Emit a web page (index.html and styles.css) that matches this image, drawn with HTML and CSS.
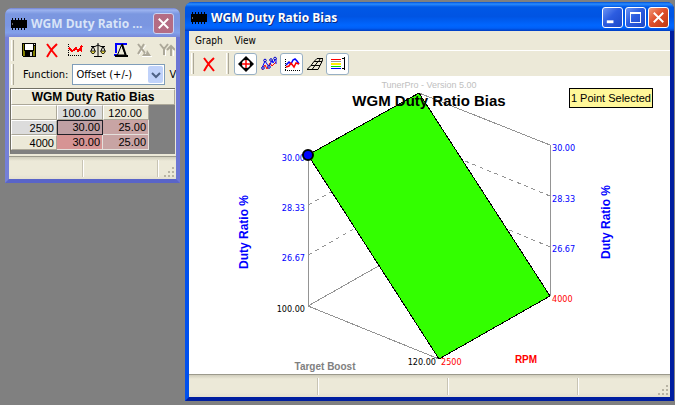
FILE: index.html
```html
<!DOCTYPE html>
<html lang="en">
<head>
  <meta charset="UTF-8">
  <meta name="viewport" content="width=device-width, initial-scale=1.0">
  <title>WGM Duty Ratio Bias</title>
  <link rel="stylesheet" href="styles.css">
</head>
<body>
  <!-- icons shared by both windows -->
  <svg class="defs" width="0" height="0" aria-hidden="true">
    <symbol id="chip" viewBox="0 0 16 12">
      <path fill="#000" d="M0 2h16v8H0z"/>
      <path stroke="#000" d="M1.500 0v12M4.500 0v12M7.500 0v12M10.500 0v12M13.500 0v12" shape-rendering="crispEdges"/>
      <path fill="#666" d="M1 5h1v2H1z"/>
    </symbol>
    <symbol id="redx" viewBox="0 0 16 16">
      <path fill="none" stroke="#f00" stroke-width="2" d="M3 2l3 4 3 4 4 5M13 2L9 6l-3 4-3 5"/>
    </symbol>
  </svg>

  <div class="desktop">
    <section class="window inactive">
      <header class="titlebar">
        <svg class="chip"><use href="#chip"/></svg>
        <h1>WGM Duty Ratio ...</h1>
        <button class="caption close" aria-label="Close"><svg viewBox="0 0 20 20"><path d="M5 5l10 10M15 5L5 15"/></svg></button>
      </header>
      <div class="toolbar">
        <span class="grip"></span>
        <button aria-label="Save"><svg viewBox="0 0 16 16" shape-rendering="crispEdges"><path fill="#000" d="M1 1h14v14H2L1 14z"/><path fill="#808000" d="M2 2h1v7h10V4h1v10H2z"/><path fill="#fff" d="M4 2h8v6H4z"/><path fill="#000" d="M4 9h8v5H4z"/><path fill="#ddd" d="M9 10h2v4H9zM13 2h1v1h-1z"/></svg></button>
        <button aria-label="Clear"><svg><use href="#redx"/></svg></button>
        <button aria-label="Graph"><svg viewBox="0 0 16 16" shape-rendering="crispEdges"><path fill="none" stroke="#000" stroke-dasharray="1 1" d="M1.500 2v12M1 13.500h14"/><path fill="none" stroke="#f00" stroke-width="1.500" d="M2 6l2 2 1 1 2-1 2-2 2 3 2-2 1 1V5l1-1"/></svg></button>
        <button aria-label="Compare"><svg viewBox="0 0 16 16"><path fill="none" stroke="#000" d="M8 1v13M4 14.500h8M1 4.500h4L8 3l3 1.500h4M3 4L1 9M3 4l2 5M13 4l-2 5M13 4l2 5"/><path fill="#f0e048" stroke="#000" stroke-width=".8" d="M.5 9h5L4 11.500H2zM10.500 9h5L14 11.500h-2z"/></svg></button>
        <button aria-label="Difference"><svg viewBox="0 0 16 16"><path fill="none" stroke="#00f" stroke-width="2" d="M14 2H3v9M1 13h6"/><path fill="#ece9d8" stroke="#000" d="M8.500 3L4.500 13h8z"/><path fill="none" stroke="#000" stroke-width="2" d="M9 2l4 12M2 14h13"/></svg></button>
        <button aria-label="Scale X" disabled><svg viewBox="0 0 16 16"><path fill="none" stroke="#fff" d="M3 3l8 10M10 3L3 13M6 14.500h10"/><path fill="none" stroke="#aca899" stroke-width="2" d="M2 2l7 9M8 2L2 12"/><path fill="#aca899" d="M15 14H6l2-3 2 1 1-4z"/></svg></button>
        <button aria-label="Scale Y" disabled><svg viewBox="0 0 16 16"><path fill="none" stroke="#fff" d="M6.500 8v6M14.500 6v8"/><path fill="none" stroke="#aca899" stroke-width="2" d="M1 2l4 5 4-5M5 7v6M12 4v10M8 8l4-4 4 4"/></svg></button>
      </div>
      <div class="toolbar functions">
        <span class="grip"></span>
        <label for="function">Function:</label>
        <span class="combo">
          <select id="function">
            <option>Offset (+/-)</option>
          </select>
          <svg viewBox="0 0 15 17"><path d="M4 7l4 4 4-4"/></svg>
        </span>
        <span>V</span>
      </div>
      <table class="grid">
        <colgroup><col class="key"><col class="val"><col class="val"><col></colgroup>
        <tr><th class="name" colspan="4">WGM Duty Ratio Bias</th></tr>
        <tr><th></th><th class="selected">100.00</th><th>120.00</th><td class="blank" rowspan="3"></td></tr>
        <tr><th class="selected">2500</th><td class="cursor">30.00</td><td>25.00</td></tr>
        <tr><th>4000</th><td class="high">30.00</td><td>25.00</td></tr>
      </table>
      <footer class="statusbar">
        <span></span><span></span><span></span>
        <svg class="sizer" viewBox="0 0 12 12"><path d="M8 0h2v2H8zM4 4h2v2H4zM8 4h2v2H8zM0 8h2v2H0zM4 8h2v2H4zM8 8h2v2H8z"/></svg>
      </footer>
    </section>

    <section class="window active">
      <header class="titlebar">
        <svg class="chip"><use href="#chip"/></svg>
        <h1>WGM Duty Ratio Bias</h1>
        <button class="caption" aria-label="Minimize"><svg viewBox="0 0 20 20"><path stroke-width="3" d="M4 14.500h7"/></svg></button>
        <button class="caption" aria-label="Maximize"><svg viewBox="0 0 20 20" shape-rendering="crispEdges"><path class="thin" d="M4.500 5v10.500h11V5"/><path d="M4 5h12"/></svg></button>
        <button class="caption close" aria-label="Close"><svg viewBox="0 0 20 20"><path d="M5 5l10 10M15 5L5 15"/></svg></button>
      </header>
      <nav class="menu">
        <a href="#">Graph</a>
        <a href="#">View</a>
      </nav>
      <div class="toolbar">
        <span class="grip"></span>
        <button aria-label="Close graph"><svg><use href="#redx"/></svg></button>
        <span class="grip second"></span>
        <button class="on" aria-label="Rotate"><svg viewBox="0 0 16 16"><path fill="#000" d="M8 0l8 8-8 8-8-8z"/><circle cx="8" cy="8" r="4" fill="#fff"/><path stroke="#f00" stroke-width="1.500" d="M8 4v8M4 8h8"/></svg></button>
        <button aria-label="Points"><svg viewBox="0 0 16 16"><path fill="none" stroke="#f00" d="M1 14l3-5 2 4 3-6 2 3 4-4"/><path fill="none" stroke="#00f" d="M1 12l3-7 4 6 3-7 1 3 3-5v6"/><g fill="#ece9d8" stroke="#00c"><circle cx="4" cy="4.500" r="1.300"/><circle cx="10" cy="4" r="1.300"/><circle cx="14" cy="2.500" r="1.300"/><circle cx="2" cy="12" r="1.300"/><circle cx="8" cy="11" r="1.300"/></g></svg></button>
        <button class="on" aria-label="Traces"><svg viewBox="0 0 16 16"><path fill="none" stroke="#000" stroke-dasharray="1 1" d="M1.500 3v11M1 14.500h15" shape-rendering="crispEdges"/><path fill="none" stroke="#00f" stroke-width="1.500" d="M2 9l3-3 2 2 2-4 2-1 2 2 2 3"/><path fill="none" stroke="#f00" stroke-width="1.500" d="M2 11l3-1 2-3 3 4 2-4 3 1"/></svg></button>
        <button aria-label="Surface"><svg viewBox="0 0 16 16"><path fill="none" stroke="#000" d="M0 13.500h11l2-4H4zM4 9.500l3-4h8l-2 4M7 5.500l3-3h6l-1 3M5 13.500l6-8M12 5l1-2"/></svg></button>
        <button class="on" aria-label="Legend"><svg viewBox="0 0 16 16" shape-rendering="crispEdges"><path fill="#f00" d="M1 3h10v1H1z"/><path fill="#999" d="M1 5h10v1H1z"/><path fill="#fe0" d="M1 7h10v2H1z"/><path fill="#0d0" d="M1 10h10v1H1z"/><path fill="#00f" d="M1 12h10v1H1z"/><path fill="#000" d="M14 1h1v13h-1zM12 2h2v1h-2zM12 12h2v1h-2z"/></svg></button>
      </div>
      <div class="chart">
        <svg class="plot" viewBox="0 0 481 298">
          <g class="axes" shape-rendering="crispEdges">
            <path d="M119.500 79V230M361.500 69V220M230 17L361 69M119 230L230 167M119 230L250 283"/>
            <path class="dashed" d="M119 129L230 66M119 179L230 116M361 120L230 66M361 171L230 116"/>
          </g>
          <text class="version" x="240" y="12">TunerPro - Version 5.00</text>
          <path class="surface" d="M230 17L361 220 250 283 119 79z"/>
          <text class="title" x="240" y="30">WGM Duty Ratio Bias</text>
          <g class="blue end">
            <text x="116" y="85">30.00</text>
            <text x="116" y="135">28.33</text>
            <text x="116" y="185">26.67</text>
          </g>
          <g class="blue">
            <text x="363" y="75">30.00</text>
            <text x="363" y="126">28.33</text>
            <text x="363" y="176">26.67</text>
          </g>
          <g class="end">
            <text x="116" y="236">100.00</text>
            <text x="247" y="289">120.00</text>
          </g>
          <g class="red">
            <text x="252" y="289">2500</text>
            <text x="363" y="226">4000</text>
          </g>
          <text class="axis blue" transform="translate(59 193) rotate(-90)">Duty Ratio %</text>
          <text class="axis blue" transform="translate(421 183) rotate(-90)">Duty Ratio %</text>
          <text class="axis small gray" x="136" y="294">Target Boost</text>
          <text class="axis small red" x="337" y="287">RPM</text>
          <circle class="point" cx="119" cy="79" r="5"/>
        </svg>
        <div class="tip">1 Point Selected</div>
      </div>
      <footer class="statusbar">
        <span></span><span></span><span></span><span></span>
        <svg class="sizer" viewBox="0 0 12 12"><path d="M8 0h2v2H8zM4 4h2v2H4zM8 4h2v2H8zM0 8h2v2H0zM4 8h2v2H4zM8 8h2v2H8z"/></svg>
      </footer>
    </section>
  </div>
</body>
</html>
```
FILE: styles.css
```css
* {
  box-sizing: border-box;
}
body {
  margin: 0;
  background: #808080;
  font: 10px "DejaVu Sans Condensed", "DejaVu Sans", sans-serif;
  color: #000;
}
.defs {
  position: absolute;
}
.desktop {
  display: flex;
  align-items: flex-start;
  gap: 5px;
  padding: 2px 1px 4px 5px;
}

.window {
  border: 4px solid #0044e0;
  border-top: none;
  border-radius: 8px 8px 0 0;
  background: #ece9d8;
}
.active {
  flex: 1;
  min-width: 0;
  border-color: #0046e0 #001ea0 #001ea0 #0050ee;
}
.inactive {
  flex: none;
  width: 175px;
  margin-top: 6px;
  border-color: #7580d8 #6c76d4 #5964c8 #7580d8;
}

.titlebar {
  display: flex;
  align-items: center;
  gap: 2px;
  height: 29px;
  margin: 0 -4px;
  padding: 2px 5px 0 6px;
  border-radius: 7px 7px 0 0;
  background: linear-gradient(#0050d8, #2a8cff 2px, #0058e6 5px, #0054e3 50%, #0066ff 80%, #0060f8 90%, #003cc0);
  color: #fff;
}
.inactive .titlebar {
  background: linear-gradient(#7080d0, #9db4f0 2px, #7b97e0 6px, #7b96e1 60%, #82a0ea 85%, #7888d8);
  color: #d8e4f8;
}
.titlebar h1 {
  flex: 1;
  margin: 0 0 0 2px;
  font: bold 12px "Open Sans", sans-serif;
  white-space: nowrap;
}
.active h1 {
  text-shadow: 1px 1px #0a2a80;
}
.chip {
  width: 16px;
  height: 12px;
}
.caption {
  width: 21px;
  height: 21px;
  padding: 0;
  border: 1px solid #fff;
  border-radius: 3px;
  background: linear-gradient(135deg, #6c94f4, #2c5ce0 45%, #1c48c8);
}
.caption svg {
  display: block;
  width: 19px;
  height: 19px;
  fill: none;
  stroke: #fff;
  stroke-width: 2;
}
.caption .thin {
  stroke-width: 1;
}
.caption.close {
  background: linear-gradient(135deg, #f09878, #e0502c 45%, #c03810);
}
.inactive .caption {
  margin-right: 1px;
}
.inactive .caption.close {
  border-color: #c8d4f4;
  background: #b46c84;
}

.menu {
  display: flex;
  gap: 12px;
  height: 20px;
  padding: 0 6px;
  border-bottom: 1px solid #fff;
  line-height: 19px;
}
.menu a {
  color: #000;
  text-decoration: none;
}

.toolbar {
  display: flex;
  align-items: center;
  height: 25px;
  padding-left: 2px;
  overflow: hidden;
}
.inactive .toolbar {
  height: 26px;
}
.inactive .toolbar.functions {
  height: 25px;
  padding-bottom: 2px;
  font-size: 11px;
}
.grip {
  flex: none;
  width: 3px;
  height: 21px;
  margin-right: 3px;
  border-right: 1px solid #aca899;
  border-left: 1px solid #fff;
}
.grip.second {
  margin: 0 5px 0 6px;
}
.toolbar button {
  flex: none;
  display: flex;
  align-items: center;
  justify-content: center;
  width: 23px;
  height: 22px;
  padding: 0;
  border: 1px solid transparent;
  background: none;
}
.toolbar button.on {
  border-color: #98b0c4;
  border-radius: 3px;
  background: #fff;
}
.toolbar button svg {
  width: 16px;
  height: 16px;
}
.functions label {
  margin: 0 4px 0 6px;
}
.combo {
  flex: none;
  position: relative;
  width: 93px;
  margin-right: 4px;
}
.combo select {
  display: block;
  appearance: none;
  width: 100%;
  height: 21px;
  padding: 0 3px;
  border: 1px solid #7f9db9;
  border-radius: 0;
  background: #fff;
  color: #000;
  font: 11px "DejaVu Sans Condensed", "DejaVu Sans", sans-serif;
}
.combo svg {
  position: absolute;
  top: 2px;
  right: 2px;
  width: 15px;
  height: 17px;
  border-radius: 2px;
  background: #c0d2fa;
  fill: none;
  stroke: #4d6185;
  stroke-width: 2;
  pointer-events: none;
}

.grid {
  width: 165px;
  margin: 0 1px 2px;
  border: 1px solid #716f64;
  border-width: 1px 0 0 1px;
  border-collapse: separate;
  border-spacing: 0;
  table-layout: fixed;
  background: #808080;
  font: 11px "Liberation Sans", Arial, sans-serif;
}
.grid .key,
.grid .val {
  width: 46px;
}
.grid th, .grid td {
  height: 15px;
  padding: 0 2px 0 0;
  border: 1px solid #e4e0dc;
  border-width: 0 1px 1px 0;
  background: #c8a4a4;
  line-height: 13px;
  text-align: right;
}
.grid th {
  border: 1px solid #fff;
  border-right-color: #aca899;
  border-bottom-color: #aca899;
  background: #ece9d8;
  font-weight: normal;
  line-height: 12px;
}
.grid tr:nth-child(2) th {
  padding-right: 6px;
}
.grid th.name {
  height: 16px;
  padding: 0;
  font-weight: bold;
  font-size: 12px;
  text-align: center;
}
.grid th.selected {
  background: #dcdcdc;
}
.grid td.cursor {
  border: 1px solid #202028;
  background: #c0a0a4;
}
.grid td.high {
  background: #d69494;
}
.grid td.blank {
  border: none;
  background: #808080;
}
.inactive .grid {
  border-bottom: 4px solid #808080;
}

.statusbar {
  position: relative;
  display: flex;
  height: 23px;
  padding: 3px 0 2px;
  border-top: 1px solid #9c9a8c;
  background: linear-gradient(#d0cdbc, #ece9d8 4px, #ece9d8 80%, #e4e0d0);
}
.statusbar span {
  flex: 0 0 130px;
  border-right: 1px solid #fff;
  box-shadow: inset -1px 0 #c8c4b4;
}
.inactive .statusbar span {
  flex-basis: 75px;
}
.statusbar span:nth-last-child(2) {
  flex: 1;
  border: none;
  box-shadow: none;
}
.sizer {
  position: absolute;
  right: 0;
  bottom: 0;
  width: 12px;
  height: 12px;
  fill: #b8b4a4;
}

.chart {
  position: relative;
  background: #fff;
}
.plot {
  display: block;
  width: 100%;
  height: auto;
}
.plot text {
  font-size: 9px;
}
.axes path {
  fill: none;
  stroke: #949494;
}
.axes .dashed {
  stroke-dasharray: 4 4;
}
.surface {
  fill: #33ff00;
  stroke: #000;
  shape-rendering: crispEdges;
}
.point {
  fill: #0000ff;
  stroke: #000;
  stroke-width: 2;
}
.plot .version {
  fill: #c0c0c0;
  font-family: "Liberation Sans", Arial, sans-serif;
  text-anchor: middle;
}
.plot .title {
  font: bold 15px "Liberation Sans", Arial, sans-serif;
  text-anchor: middle;
}
.plot .axis {
  font: bold 12px "Liberation Sans", Arial, sans-serif;
}
.plot .small {
  font-size: 10px;
}
.end {
  text-anchor: end;
}
.blue {
  fill: #0000ff;
}
.red {
  fill: #ff0000;
}
.gray {
  text-anchor: middle;
  fill: #808080;
}
.red.axis {
  text-anchor: middle;
}
.tip {
  position: absolute;
  top: 12px;
  right: 17px;
  padding: 0 1px;
  border: 1px solid #000;
  background: #fff799;
  font: 11px/18px "Liberation Sans", Arial, sans-serif;
}
```
